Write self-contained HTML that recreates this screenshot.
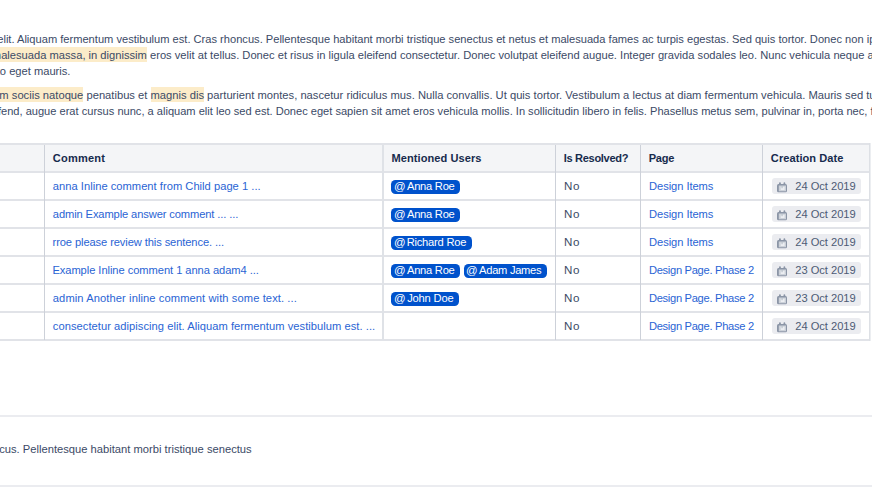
<!DOCTYPE html>
<html><head><meta charset="utf-8"><style>
html,body{margin:0;padding:0;background:#fff;width:872px;height:496px;overflow:hidden;position:relative}
.t{position:absolute;white-space:nowrap;line-height:16px;transform-origin:0 0;font-family:"Liberation Sans",sans-serif}
.r{position:absolute}
.hl{background:#fcecc9;padding:2px 0 1px}
.badge{position:absolute;height:14px;border-radius:4.5px;background:#0052cc}
.loz{position:absolute;width:89px;height:16px;border-radius:3px;background:#ebecf0}
</style></head><body>
<div class="t" style="left:-2.78px;top:31.0px;font-size:11.122px;color:#3b4a66;font-weight:400;">elit. Aliquam fermentum vestibulum est. Cras rhoncus. Pellentesque habitant morbi tristique senectus et netus et malesuada fames ac turpis egestas. Sed quis tortor. Donec non ipsum.</div>
<div class="t" style="left:-8.17px;top:47.0px;font-size:11.179px;color:#3b4a66;font-weight:400;"><span class="hl">malesuada massa, in dignissim</span> eros velit at tellus. Donec et risus in ligula eleifend consectetur. Donec volutpat eleifend augue. Integer gravida sodales leo. Nunc vehicula neque ac erat.</div>
<div class="t" style="left:-17.5px;top:63.0px;font-size:11.15px;color:#3b4a66;font-weight:400;">justo eget mauris.</div>
<div class="t" style="left:-14.95px;top:87.0px;font-size:11.204px;color:#3b4a66;font-weight:400;"><span class="hl">Cum sociis natoque</span> penatibus et <span class="hl">magnis dis</span> parturient montes, nascetur ridiculus mus. Nulla convallis. Ut quis tortor. Vestibulum a lectus at diam fermentum vehicula. Mauris sed turpis.</div>
<div class="t" style="left:-19.33px;top:103.0px;font-size:11.089px;color:#3b4a66;font-weight:400;">eleifend, augue erat cursus nunc, a aliquam elit leo sed est. Donec eget sapien sit amet eros vehicula mollis. In sollicitudin libero in felis. Phasellus metus sem, pulvinar in, porta nec, faucibus in</div>
<div class="r" style="left:0px;top:145px;width:870px;height:26px;background:#f4f5f7;"></div>
<div class="r" style="left:0px;top:143px;width:871px;height:2px;background:#e1e3e8;"></div>
<div class="r" style="left:0px;top:171px;width:871px;height:2px;background:#e1e3e8;"></div>
<div class="r" style="left:0px;top:199px;width:871px;height:2px;background:#e1e3e8;"></div>
<div class="r" style="left:0px;top:227px;width:871px;height:2px;background:#e1e3e8;"></div>
<div class="r" style="left:0px;top:255px;width:871px;height:2px;background:#e1e3e8;"></div>
<div class="r" style="left:0px;top:283px;width:871px;height:2px;background:#e1e3e8;"></div>
<div class="r" style="left:0px;top:311px;width:871px;height:2px;background:#e1e3e8;"></div>
<div class="r" style="left:0px;top:339px;width:871px;height:2px;background:#e1e3e8;"></div>
<div class="r" style="left:44px;top:145px;width:1px;height:195px;background:#cdd1d9;"></div>
<div class="r" style="left:555px;top:145px;width:1px;height:195px;background:#cdd1d9;"></div>
<div class="r" style="left:640px;top:145px;width:1px;height:195px;background:#cdd1d9;"></div>
<div class="r" style="left:762px;top:145px;width:1px;height:195px;background:#cdd1d9;"></div>
<div class="r" style="left:382px;top:145px;width:2px;height:195px;background:#dfe2e7;"></div>
<div class="r" style="left:869px;top:143px;width:1px;height:198px;background:#dde0e5;"></div>
<div class="r" style="left:870px;top:143px;width:1px;height:198px;background:#eceef1;"></div>
<div class="t" style="left:52.85px;top:150.0px;font-size:11.05px;color:#172b4d;font-weight:700;letter-spacing:0.172px;">Comment</div>
<div class="t" style="left:391.56px;top:150.0px;font-size:11.05px;color:#172b4d;font-weight:700;letter-spacing:0.063px;">Mentioned Users</div>
<div class="t" style="left:563.76px;top:150.0px;font-size:11.05px;color:#172b4d;font-weight:700;letter-spacing:-0.316px;">Is Resolved?</div>
<div class="t" style="left:648.76px;top:150.0px;font-size:11.05px;color:#172b4d;font-weight:700;letter-spacing:-0.263px;">Page</div>
<div class="t" style="left:770.85px;top:150.0px;font-size:11.05px;color:#172b4d;font-weight:700;letter-spacing:0.067px;">Creation Date</div>
<div class="t" style="left:52.83px;top:178.0px;font-size:11.15px;color:#2a64d4;font-weight:400;letter-spacing:0.024px;">anna Inline comment from Child page 1 ...</div>
<div class="badge" style="left:391.3px;top:179.5px;width:69.2px"></div>
<div class="t" style="left:394.0px;top:178.8px;font-size:10.2px;color:#fff;font-weight:400;transform:scaleX(1.12)">@</div>
<div class="t" style="left:406.98px;top:178.0px;font-size:11.15px;color:#fff;font-weight:400;letter-spacing:-0.249px;">Anna Roe</div>
<div class="t" style="left:564.05px;top:178.0px;font-size:11.6px;color:#3b4a66;font-weight:400;letter-spacing:0.600px;">No</div>
<div class="t" style="left:649.09px;top:178.0px;font-size:11.15px;color:#2a64d4;font-weight:400;letter-spacing:-0.063px;">Design Items</div>
<div class="loz" style="left:772px;top:178px"><svg width="10" height="11" viewBox="0 0 10 11" style="position:absolute;left:5px;top:3.5px"><rect x="0" y="1.9" width="10" height="8.4" rx="1.5" fill="#8b95a6"/><rect x="2" y="0.3" width="1.9" height="2.4" rx="0.9" fill="#8b95a6"/><rect x="6.5" y="0.3" width="1.8" height="2.4" rx="0.9" fill="#8b95a6"/><rect x="1.8" y="3.5" width="7.2" height="5.8" fill="#ccd1d9"/><rect x="3.7" y="4.7" width="3.9" height="3.3" fill="#eceef2"/><rect x="4.6" y="4.2" width="0.9" height="2" fill="#a9b1bd"/></svg></div>
<div class="t" style="left:795.24px;top:178.0px;font-size:11.15px;color:#4d5b75;font-weight:400;letter-spacing:-0.021px;">24 Oct 2019</div>
<div class="t" style="left:52.83px;top:206.0px;font-size:11.15px;color:#2a64d4;font-weight:400;letter-spacing:-0.116px;">admin Example answer comment ... ...</div>
<div class="badge" style="left:391.3px;top:207.5px;width:69.2px"></div>
<div class="t" style="left:394.0px;top:206.8px;font-size:10.2px;color:#fff;font-weight:400;transform:scaleX(1.12)">@</div>
<div class="t" style="left:406.98px;top:206.0px;font-size:11.15px;color:#fff;font-weight:400;letter-spacing:-0.249px;">Anna Roe</div>
<div class="t" style="left:564.05px;top:206.0px;font-size:11.6px;color:#3b4a66;font-weight:400;letter-spacing:0.600px;">No</div>
<div class="t" style="left:649.09px;top:206.0px;font-size:11.15px;color:#2a64d4;font-weight:400;letter-spacing:-0.063px;">Design Items</div>
<div class="loz" style="left:772px;top:206px"><svg width="10" height="11" viewBox="0 0 10 11" style="position:absolute;left:5px;top:3.5px"><rect x="0" y="1.9" width="10" height="8.4" rx="1.5" fill="#8b95a6"/><rect x="2" y="0.3" width="1.9" height="2.4" rx="0.9" fill="#8b95a6"/><rect x="6.5" y="0.3" width="1.8" height="2.4" rx="0.9" fill="#8b95a6"/><rect x="1.8" y="3.5" width="7.2" height="5.8" fill="#ccd1d9"/><rect x="3.7" y="4.7" width="3.9" height="3.3" fill="#eceef2"/><rect x="4.6" y="4.2" width="0.9" height="2" fill="#a9b1bd"/></svg></div>
<div class="t" style="left:795.24px;top:206.0px;font-size:11.15px;color:#4d5b75;font-weight:400;letter-spacing:-0.021px;">24 Oct 2019</div>
<div class="t" style="left:52.56px;top:234.0px;font-size:11.15px;color:#2a64d4;font-weight:400;letter-spacing:-0.103px;">rroe please review this sentence. ...</div>
<div class="badge" style="left:391.2px;top:235.5px;width:80.5px"></div>
<div class="t" style="left:393.9px;top:234.8px;font-size:10.2px;color:#fff;font-weight:400;transform:scaleX(1.12)">@</div>
<div class="t" style="left:406.69px;top:234.0px;font-size:11.15px;color:#fff;font-weight:400;letter-spacing:-0.221px;">Richard Roe</div>
<div class="t" style="left:564.05px;top:234.0px;font-size:11.6px;color:#3b4a66;font-weight:400;letter-spacing:0.600px;">No</div>
<div class="t" style="left:649.09px;top:234.0px;font-size:11.15px;color:#2a64d4;font-weight:400;letter-spacing:-0.063px;">Design Items</div>
<div class="loz" style="left:772px;top:234px"><svg width="10" height="11" viewBox="0 0 10 11" style="position:absolute;left:5px;top:3.5px"><rect x="0" y="1.9" width="10" height="8.4" rx="1.5" fill="#8b95a6"/><rect x="2" y="0.3" width="1.9" height="2.4" rx="0.9" fill="#8b95a6"/><rect x="6.5" y="0.3" width="1.8" height="2.4" rx="0.9" fill="#8b95a6"/><rect x="1.8" y="3.5" width="7.2" height="5.8" fill="#ccd1d9"/><rect x="3.7" y="4.7" width="3.9" height="3.3" fill="#eceef2"/><rect x="4.6" y="4.2" width="0.9" height="2" fill="#a9b1bd"/></svg></div>
<div class="t" style="left:795.24px;top:234.0px;font-size:11.15px;color:#4d5b75;font-weight:400;letter-spacing:-0.021px;">24 Oct 2019</div>
<div class="t" style="left:52.39px;top:262.0px;font-size:11.15px;color:#2a64d4;font-weight:400;letter-spacing:-0.057px;">Example Inline comment 1 anna adam4 ...</div>
<div class="badge" style="left:391.3px;top:263.5px;width:69.2px"></div>
<div class="t" style="left:394.0px;top:262.8px;font-size:10.2px;color:#fff;font-weight:400;transform:scaleX(1.12)">@</div>
<div class="t" style="left:406.98px;top:262.0px;font-size:11.15px;color:#fff;font-weight:400;letter-spacing:-0.249px;">Anna Roe</div>
<div class="badge" style="left:463.6px;top:263.5px;width:83.2px"></div>
<div class="t" style="left:466.3px;top:262.8px;font-size:10.2px;color:#fff;font-weight:400;transform:scaleX(1.12)">@</div>
<div class="t" style="left:479.08px;top:262.0px;font-size:11.15px;color:#fff;font-weight:400;letter-spacing:-0.277px;">Adam James</div>
<div class="t" style="left:564.05px;top:262.0px;font-size:11.6px;color:#3b4a66;font-weight:400;letter-spacing:0.600px;">No</div>
<div class="t" style="left:648.89px;top:262.0px;font-size:11.15px;color:#2a64d4;font-weight:400;letter-spacing:-0.295px;">Design Page. Phase 2</div>
<div class="loz" style="left:772px;top:262px"><svg width="10" height="11" viewBox="0 0 10 11" style="position:absolute;left:5px;top:3.5px"><rect x="0" y="1.9" width="10" height="8.4" rx="1.5" fill="#8b95a6"/><rect x="2" y="0.3" width="1.9" height="2.4" rx="0.9" fill="#8b95a6"/><rect x="6.5" y="0.3" width="1.8" height="2.4" rx="0.9" fill="#8b95a6"/><rect x="1.8" y="3.5" width="7.2" height="5.8" fill="#ccd1d9"/><rect x="3.7" y="4.7" width="3.9" height="3.3" fill="#eceef2"/><rect x="4.6" y="4.2" width="0.9" height="2" fill="#a9b1bd"/></svg></div>
<div class="t" style="left:795.24px;top:262.0px;font-size:11.15px;color:#4d5b75;font-weight:400;letter-spacing:-0.021px;">23 Oct 2019</div>
<div class="t" style="left:52.83px;top:290.0px;font-size:11.15px;color:#2a64d4;font-weight:400;letter-spacing:0.093px;">admin Another inline comment with some text. ...</div>
<div class="badge" style="left:391.2px;top:291.5px;width:68.2px"></div>
<div class="t" style="left:393.9px;top:290.8px;font-size:10.2px;color:#fff;font-weight:400;transform:scaleX(1.12)">@</div>
<div class="t" style="left:407.23px;top:290.0px;font-size:11.15px;color:#fff;font-weight:400;letter-spacing:-0.190px;">John Doe</div>
<div class="t" style="left:564.05px;top:290.0px;font-size:11.6px;color:#3b4a66;font-weight:400;letter-spacing:0.600px;">No</div>
<div class="t" style="left:648.89px;top:290.0px;font-size:11.15px;color:#2a64d4;font-weight:400;letter-spacing:-0.295px;">Design Page. Phase 2</div>
<div class="loz" style="left:772px;top:290px"><svg width="10" height="11" viewBox="0 0 10 11" style="position:absolute;left:5px;top:3.5px"><rect x="0" y="1.9" width="10" height="8.4" rx="1.5" fill="#8b95a6"/><rect x="2" y="0.3" width="1.9" height="2.4" rx="0.9" fill="#8b95a6"/><rect x="6.5" y="0.3" width="1.8" height="2.4" rx="0.9" fill="#8b95a6"/><rect x="1.8" y="3.5" width="7.2" height="5.8" fill="#ccd1d9"/><rect x="3.7" y="4.7" width="3.9" height="3.3" fill="#eceef2"/><rect x="4.6" y="4.2" width="0.9" height="2" fill="#a9b1bd"/></svg></div>
<div class="t" style="left:795.24px;top:290.0px;font-size:11.15px;color:#4d5b75;font-weight:400;letter-spacing:-0.021px;">23 Oct 2019</div>
<div class="t" style="left:52.83px;top:318.0px;font-size:11.15px;color:#2a64d4;font-weight:400;letter-spacing:0.043px;">consectetur adipiscing elit. Aliquam fermentum vestibulum est. ...</div>
<div class="t" style="left:564.05px;top:318.0px;font-size:11.6px;color:#3b4a66;font-weight:400;letter-spacing:0.600px;">No</div>
<div class="t" style="left:648.89px;top:318.0px;font-size:11.15px;color:#2a64d4;font-weight:400;letter-spacing:-0.295px;">Design Page. Phase 2</div>
<div class="loz" style="left:772px;top:318px"><svg width="10" height="11" viewBox="0 0 10 11" style="position:absolute;left:5px;top:3.5px"><rect x="0" y="1.9" width="10" height="8.4" rx="1.5" fill="#8b95a6"/><rect x="2" y="0.3" width="1.9" height="2.4" rx="0.9" fill="#8b95a6"/><rect x="6.5" y="0.3" width="1.8" height="2.4" rx="0.9" fill="#8b95a6"/><rect x="1.8" y="3.5" width="7.2" height="5.8" fill="#ccd1d9"/><rect x="3.7" y="4.7" width="3.9" height="3.3" fill="#eceef2"/><rect x="4.6" y="4.2" width="0.9" height="2" fill="#a9b1bd"/></svg></div>
<div class="t" style="left:795.24px;top:318.0px;font-size:11.15px;color:#4d5b75;font-weight:400;letter-spacing:-0.021px;">24 Oct 2019</div>
<div class="r" style="left:0px;top:415px;width:872px;height:2px;background:#ebecf0;"></div>
<div class="r" style="left:0px;top:485px;width:872px;height:2px;background:#ebecf0;"></div>
<div class="t" style="left:-23.23px;top:441.0px;font-size:11.199px;color:#3b4a66;font-weight:400;">rhoncus. Pellentesque habitant morbi tristique senectus</div>
</body></html>
